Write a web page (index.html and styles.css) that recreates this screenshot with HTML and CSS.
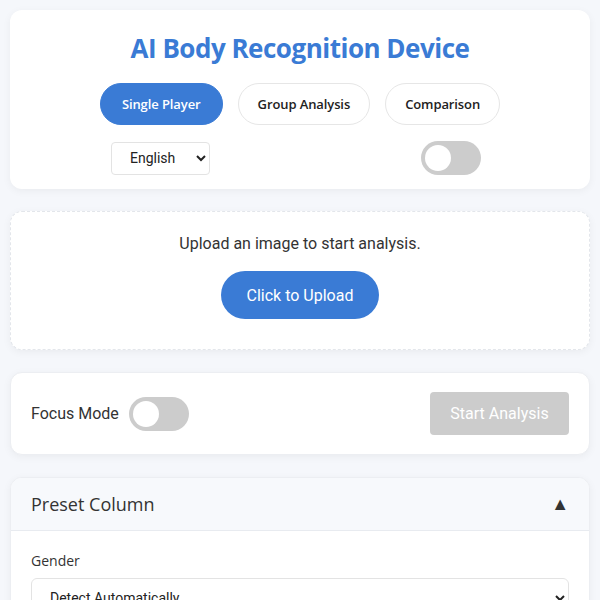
FILE: index.html
```html
<!DOCTYPE html>
<html lang="en">
<head>
<meta charset="utf-8">
<title>AI Body Recognition Device</title>
<link rel="stylesheet" href="styles.css">
</head>
<body>
<div class="page">
  <header class="card header">
    <h1 class="title">AI Body Recognition Device</h1>
    <nav class="modes">
      <button class="mode active">Single Player</button>
      <button class="mode">Group Analysis</button>
      <button class="mode">Comparison</button>
    </nav>
    <div class="controls">
      <select class="lang">
        <option>English</option>
      </select>
      <span class="switch"><span class="knob"></span></span>
    </div>
  </header>

  <section class="card upload">
    <p class="upload-text">Upload an image to start analysis.</p>
    <button class="upload-btn">Click to Upload</button>
  </section>

  <section class="card actions">
    <div class="focus">
      <span class="focus-label">Focus Mode</span>
      <span class="switch"><span class="knob"></span></span>
    </div>
    <button class="start" disabled>Start Analysis</button>
  </section>

  <section class="card preset">
    <div class="preset-head">
      <h2 class="preset-title">Preset Column</h2>
      <span class="caret">&#9650;</span>
    </div>
    <div class="preset-body">
      <label class="field-label">Gender</label>
      <select class="field-select">
        <option>Detect Automatically</option>
      </select>
    </div>
  </section>
</div>
</body>
</html>
```

FILE: styles.css
```css
* { box-sizing: border-box; }
html, body { margin: 0; padding: 0; }
body {
  background: #f5f7fb;
  font-family: Roboto, "Liberation Sans", sans-serif;
  color: #333;
}
.page {
  padding: 10px;
  display: flex;
  flex-direction: column;
  gap: 22px;
}
.card {
  background: #fff;
  border-radius: 12px;
  box-shadow: 0 2px 8px rgba(0, 0, 0, 0.05);
}
.header {
  padding: 20px 20px 14px;
  display: flex;
  flex-direction: column;
  align-items: center;
}
.title {
  margin: 0;
  font-family: "Open Sans", sans-serif;
  font-weight: 700;
  font-size: 26px;
  letter-spacing: -0.5px;
  color: #3a7bd5;
  line-height: 36px;
}
.modes {
  margin-top: 17px;
  display: flex;
  gap: 15px;
}
.mode {
  height: 42px;
  padding: 0 19px;
  border-radius: 21px;
  border: 1px solid #e6e6e6;
  background: #fff;
  color: #222;
  font-family: "Open Sans", sans-serif;
  font-weight: 600;
  font-size: 13px;
  letter-spacing: -0.1px;
}
.mode.active {
  background: #3a7bd5;
  border-color: #3a7bd5;
  color: #fff;
  padding: 0 21px;
}
.controls {
  margin-top: 16px;
  align-self: stretch;
  display: flex;
  justify-content: space-between;
  align-items: center;
  padding: 0 89px 0 81px;
}
.lang {
  width: 99px;
  height: 33px;
  border: 1px solid #e3e3e3;
  border-radius: 4px;
  background: #fff;
  font-family: Roboto, sans-serif;
  font-size: 14px;
  color: #222;
  padding: 0 10px 0 14px;
}
.switch {
  display: inline-block;
  width: 60px;
  height: 34px;
  border-radius: 17px;
  background: #ccc;
  position: relative;
}
.knob {
  position: absolute;
  left: 4px;
  top: 4px;
  width: 26px;
  height: 26px;
  border-radius: 50%;
  background: #fff;
}
.upload {
  border: 1px dashed #e3e6eb;
  height: 139px;
  display: flex;
  flex-direction: column;
  align-items: center;
  padding-top: 22px;
}
.upload-text {
  margin: 0;
  font-size: 16px;
  line-height: 20px;
  color: #333;
}
.upload-btn {
  margin-top: 17px;
  width: 158px;
  height: 48px;
  border: none;
  border-radius: 24px;
  background: #3a7bd5;
  color: #fff;
  font-family: Roboto, sans-serif;
  font-size: 16px;
}
.actions {
  border: 1px solid #eceef2;
  height: 83px;
  display: flex;
  align-items: center;
  justify-content: space-between;
  padding: 0 20px;
}
.focus {
  display: flex;
  align-items: center;
  gap: 10px;
}
.focus-label { font-size: 16px; color: #333; }
.start {
  width: 139px;
  height: 43px;
  border: none;
  border-radius: 4px;
  background: #ccc;
  color: #fff;
  font-family: Roboto, sans-serif;
  font-size: 16px;
}
.preset {
  border: 1px solid #eceef2;
  overflow: hidden;
}
.preset-head {
  background: #f7f9fc;
  border-bottom: 1px solid #e8ebf0;
  height: 53px;
  display: flex;
  align-items: center;
  justify-content: space-between;
  padding: 0 20px;
}
.preset-title {
  margin: 0;
  font-family: "Open Sans", sans-serif;
  font-weight: 500;
  font-size: 18px;
  color: #333;
}
.caret { font-size: 18px; color: #333; }
.preset-body {
  padding: 20px 20px;
  display: flex;
  flex-direction: column;
}
.field-label {
  font-family: "Open Sans", sans-serif;
  font-size: 14px;
  color: #333;
  margin-bottom: 8px;
}
.field-select {
  height: 40px;
  border: 1px solid #e3e3e3;
  border-radius: 6px;
  background: #fff;
  font-family: Roboto, sans-serif;
  font-size: 14px;
  color: #222;
  padding: 0 14px;
}
```
